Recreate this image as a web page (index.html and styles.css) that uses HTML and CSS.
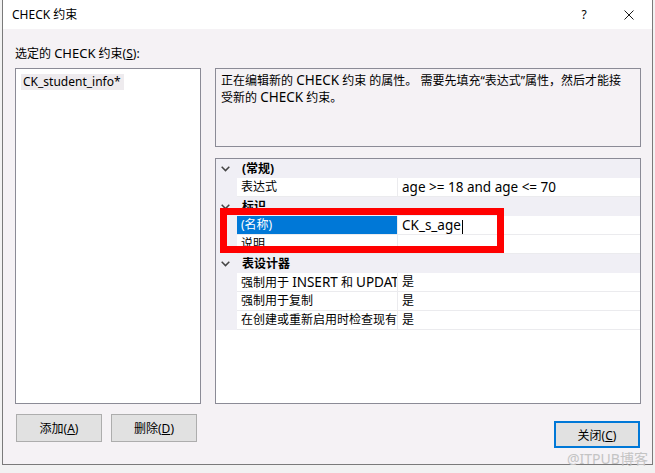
FILE: index.html
```html
<!DOCTYPE html>
<html lang="zh-CN">
<head>
<meta charset="utf-8">
<title>CHECK 约束</title>
<link rel="stylesheet" href="styles.css">
</head>
<body>
<div class="dialog">
  <div class="titlebar">
    <span class="title">CHECK 约束</span>
    <span class="tb-btn help">?</span>
    <span class="tb-btn close"><svg width="10" height="10" viewBox="0 0 10 10"><path d="M0.5 0.5 L9.5 9.5 M9.5 0.5 L0.5 9.5" stroke="#1a1a1a" stroke-width="1" fill="none"/></svg></span>
  </div>
  <div class="content">
    <div class="label">选定的 <span class="lat-s">CHECK</span> 约束(<u>S</u>):</div>
    <div class="main">
      <div class="listbox"><span class="list-item">CK_student_info*</span></div>
      <div class="right">
        <div class="desc">正在编辑新的 <span class="lat">CHECK</span> 约束 的属性。 需要先填充“表达式”属性，然后才能接<br>受新的 <span class="lat">CHECK</span> 约束。</div>
        <div class="grid">
          <div class="cat"><span class="gutter"><svg width="9" height="6" viewBox="0 0 9 6"><path d="M0.7 0.8 L4.5 4.6 L8.3 0.8" stroke="#444" stroke-width="1.5" fill="none"/></svg></span><span class="cat-name">(常规)</span></div>
          <div class="prop"><span class="gutter"></span><span class="pname">表达式</span><span class="pval"><span class="lat">age &gt;= 18 and age &lt;= 70</span></span></div>
          <div class="cat"><span class="gutter"><svg width="9" height="6" viewBox="0 0 9 6"><path d="M0.7 0.8 L4.5 4.6 L8.3 0.8" stroke="#444" stroke-width="1.5" fill="none"/></svg></span><span class="cat-name">标识</span></div>
          <div class="prop selected"><span class="gutter"></span><span class="pname">(名称)</span><span class="pval"><span class="lat">CK_s_age</span><span class="caret"></span></span></div>
          <div class="prop"><span class="gutter"></span><span class="pname">说明</span><span class="pval"></span></div>
          <div class="cat"><span class="gutter"><svg width="9" height="6" viewBox="0 0 9 6"><path d="M0.7 0.8 L4.5 4.6 L8.3 0.8" stroke="#444" stroke-width="1.5" fill="none"/></svg></span><span class="cat-name">表设计器</span></div>
          <div class="prop"><span class="gutter"></span><span class="pname">强制用于 <span class="lat">INSERT</span> 和 <span class="lat">UPDAT</span></span><span class="pval">是</span></div>
          <div class="prop"><span class="gutter"></span><span class="pname">强制用于复制</span><span class="pval">是</span></div>
          <div class="prop"><span class="gutter"></span><span class="pname">在创建或重新启用时检查现有</span><span class="pval">是</span></div>
          <div class="annot"></div>
        </div>
      </div>
    </div>
    <div class="buttons">
      <div class="btn-group">
        <button class="btn">添加(<u>A</u>)</button>
        <button class="btn">删除(<u>D</u>)</button>
      </div>
      <button class="btn primary">关闭(<u>C</u>)</button>
    </div>
  </div>
</div>
<div class="watermark">@ITPUB博客</div>
</body>
</html>
```

FILE: styles.css
```css
* { box-sizing: border-box; }
html, body { margin: 0; padding: 0; }
body {
  width: 655px;
  height: 473px;
  overflow: hidden;
  position: relative;
  background: #f2f2f2;
  font-family: "Noto Sans", "Noto Sans CJK SC", sans-serif;
  font-size: 12px;
  color: #000;
}
.lat { font-size: 13.5px; }
.lat-s { font-size: 13px; }
.dialog {
  margin-left: 2px;
  width: 651px;
  height: 465px;
  border: 1px solid #7a7a7a;
  border-top: none;
  display: flex;
  flex-direction: column;
  background: #f5f2f5;
}
.titlebar {
  height: 29px;
  flex: none;
  background: #fff;
  display: flex;
  align-items: center;
  padding-left: 9px;
}
.title { flex: 1; line-height: 16px; }
.tb-btn {
  width: 46px;
  height: 29px;
  display: flex;
  align-items: center;
  justify-content: center;
}
.help { font-size: 12px; padding-left: 2px; }
.content {
  flex: 1;
  padding: 16px 11px 0 12px;
  display: flex;
  flex-direction: column;
}
.label { line-height: 16px; height: 16px; margin-bottom: 7px; }
.main {
  display: grid;
  grid-template-columns: 186px 1fr;
  column-gap: 14px;
  height: 336px;
  flex: none;
}
.listbox {
  border: 1px solid #8b8b96;
  background: #fff;
  padding: 4px 5px;
}
.list-item {
  display: inline-block;
  background: #eeebee;
  padding: 0 3px 0 2px;
  line-height: 16px;
}
.right { display: flex; flex-direction: column; gap: 11px; }
.desc {
  height: 79px;
  flex: none;
  border: 1px solid #8b8b96;
  padding: 3px 5px;
  line-height: 16px;
  white-space: nowrap;
}
.grid {
  flex: 1;
  border: 1px solid #8b8b96;
  background: #fff;
  position: relative;
}
.cat {
  display: flex;
  height: 19px;
  background: #f0eff5;
}
.gutter {
  width: 21px;
  flex: none;
  background: #f0eff5;
  display: flex;
  align-items: center;
  justify-content: center;
  padding-right: 2px;
}
.cat-name { font-weight: bold; padding-left: 5px; line-height: 19px; }
.prop {
  display: grid;
  grid-template-columns: 21px 161px 1fr;
  height: 19px;
}
.pname, .pval {
  padding-left: 4px;
  line-height: 18px;
  white-space: nowrap;
  overflow: hidden;
  border-bottom: 1px solid #ebebee;
}
.pname { border-right: 1px solid #ebebee; }
.selected .pname { background: #0078d7; color: #fff; }
.caret {
  display: inline-block;
  width: 1px;
  height: 14px;
  background: #000;
  vertical-align: middle;
  margin-left: 1px;
}
.annot {
  position: absolute;
  left: 4px;
  top: 49px;
  width: 284px;
  height: 45px;
  border: 7px solid #ff0000;
}
.buttons {
  display: flex;
  justify-content: space-between;
  align-items: flex-start;
  margin-top: 10px;
}
.btn-group { display: flex; gap: 9px; margin-left: 1px; }
.btn {
  width: 86px;
  height: 28px;
  border: 1px solid #adadad;
  background: #e1e1e1;
  font: inherit;
  color: #000;
  padding: 0;
}
.btn.primary {
  height: 27px;
  border: 2px solid #0078d7;
  margin-top: 7px;
  margin-right: 1px;
}
.watermark {
  position: absolute;
  left: 567px;
  top: 450px;
  font-size: 14px;
  line-height: 18px;
  color: #c4c4c4;
}
```
